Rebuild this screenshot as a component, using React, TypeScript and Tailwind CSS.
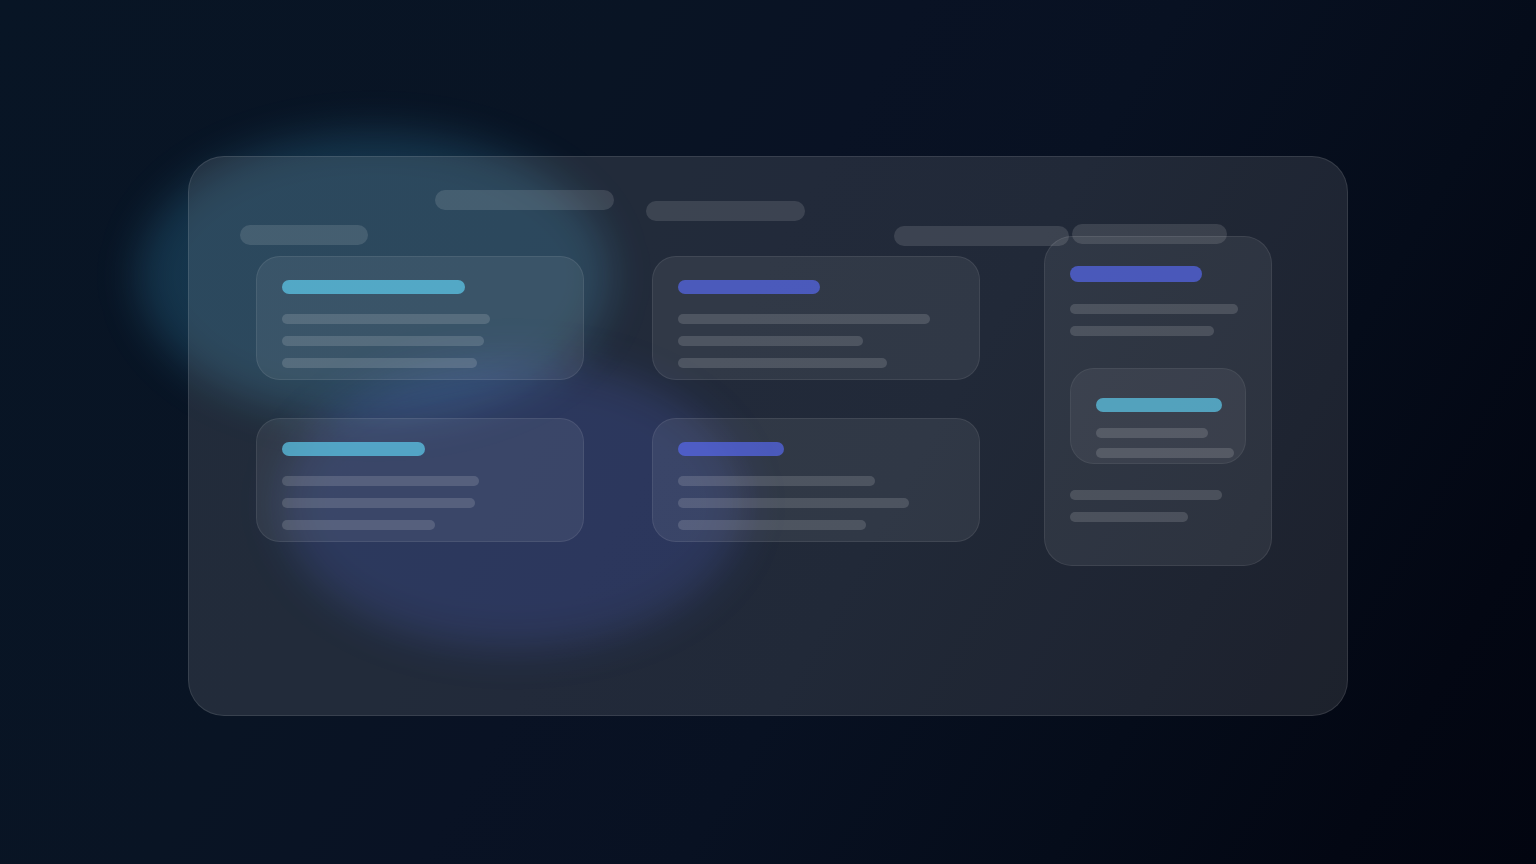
import React from 'react';
import { clsx } from 'clsx';

type Tone = 'cyan' | 'indigo';

const tones: Record<Tone, string> = {
    cyan: 'bg-[#5fd3f5]/67',
    indigo: 'bg-[#596cfb]/65',
};

const cards: { tone: Tone; title: string; lines: string[] }[] = [
    { tone: 'cyan', title: 'w-[183px]', lines: ['w-[208px]', 'w-[202px]', 'w-[195px]'] },
    { tone: 'indigo', title: 'w-[142px]', lines: ['w-[252px]', 'w-[185px]', 'w-[209px]'] },
    { tone: 'cyan', title: 'w-[143px]', lines: ['w-[197px]', 'w-[193px]', 'w-[153px]'] },
    { tone: 'indigo', title: 'w-[106px]', lines: ['w-[197px]', 'w-[231px]', 'w-[188px]'] },
];

const Title: React.FC<{ tone: Tone; className: string }> = ({ tone, className }) => (
    <div className={clsx('rounded-full', tones[tone], className)}></div>
);

const Line: React.FC<{ className: string }> = ({ className }) => (
    <div className={clsx('h-2.5 rounded-full bg-white/14', className)}></div>
);

const Pill: React.FC<{ className: string }> = ({ className }) => (
    <div className={clsx('h-5 shrink-0 rounded-full bg-white/12', className)}></div>
);

const Card: React.FC<{ tone: Tone; title: string; lines: string[] }> = ({ tone, title, lines }) => (
    <article className="rounded-3xl border border-white/8 bg-white/7 px-[25px] pt-[23px] pb-[11px]">
        <Title tone={tone} className={clsx('h-3.5', title)} />
        <div className="mt-5 flex flex-col gap-3">
            {lines.map((line, i) => (
                <Line key={i} className={line} />
            ))}
        </div>
    </article>
);

const Sidebar: React.FC = () => (
    <aside className="-mt-5 w-[228px] shrink-0 rounded-[28px] border border-white/8 bg-white/7 px-[25px] pt-[29px] pb-[43px]">
        <Title tone="indigo" className="h-4 w-[132px]" />
        <div className="mt-[22px] flex flex-col gap-3">
            <Line className="w-[168px]" />
            <Line className="w-36" />
        </div>

        {/* Nested card */}
        <div className="mt-8 rounded-3xl border border-white/6 bg-white/6 pt-[29px] pb-[5px] pl-[25px]">
            <Title tone="cyan" className="h-3.5 w-[126px]" />
            <div className="mt-4 flex flex-col gap-2.5">
                <Line className="w-28" />
                <Line className="w-[138px]" />
            </div>
        </div>

        <div className="mt-[26px] flex flex-col gap-3">
            <Line className="w-[152px]" />
            <Line className="w-[118px]" />
        </div>
    </aside>
);

export default function App() {
    return (
        <main className="relative min-h-screen overflow-hidden bg-[linear-gradient(120deg,#081525_0%,#091424_32%,#091224_45%,#081122_58%,#050c1a_76%,#030713_90%,#020510_100%)] px-6 pt-[156px] pb-[148px]">
            {/* Ambient glows */}
            <div className="absolute top-[132px] left-[138px] h-[288px] w-[472px] rounded-[50%] bg-[#48c0f5]/19 blur-[20px]"></div>
            <div className="absolute top-[360px] left-[282px] h-[288px] w-[462px] rounded-[50%] bg-[#4a64f5]/19 blur-[20px]"></div>

            {/* Glass panel */}
            <section className="relative mx-auto min-h-[560px] w-full max-w-[1160px] rounded-[36px] border border-white/10 bg-white/10 pt-[33px] pr-[75px] pl-[51px]">
                <header className="flex h-[66px] items-start">
                    <Pill className="mt-[35px] w-32" />
                    <Pill className="ml-[67px] w-[179px]" />
                    <Pill className="mt-[11px] ml-8 w-[159px]" />
                    <Pill className="mt-9 ml-[89px] w-[175px]" />
                    <Pill className="mt-[34px] ml-[3px] w-[155px]" />
                </header>

                <div className="flex items-start gap-16 pl-4">
                    <div className="grid flex-1 grid-cols-2 gap-x-[68px] gap-y-[38px]">
                        {cards.map((card, i) => (
                            <Card key={i} {...card} />
                        ))}
                    </div>
                    <Sidebar />
                </div>
            </section>
        </main>
    );
}
